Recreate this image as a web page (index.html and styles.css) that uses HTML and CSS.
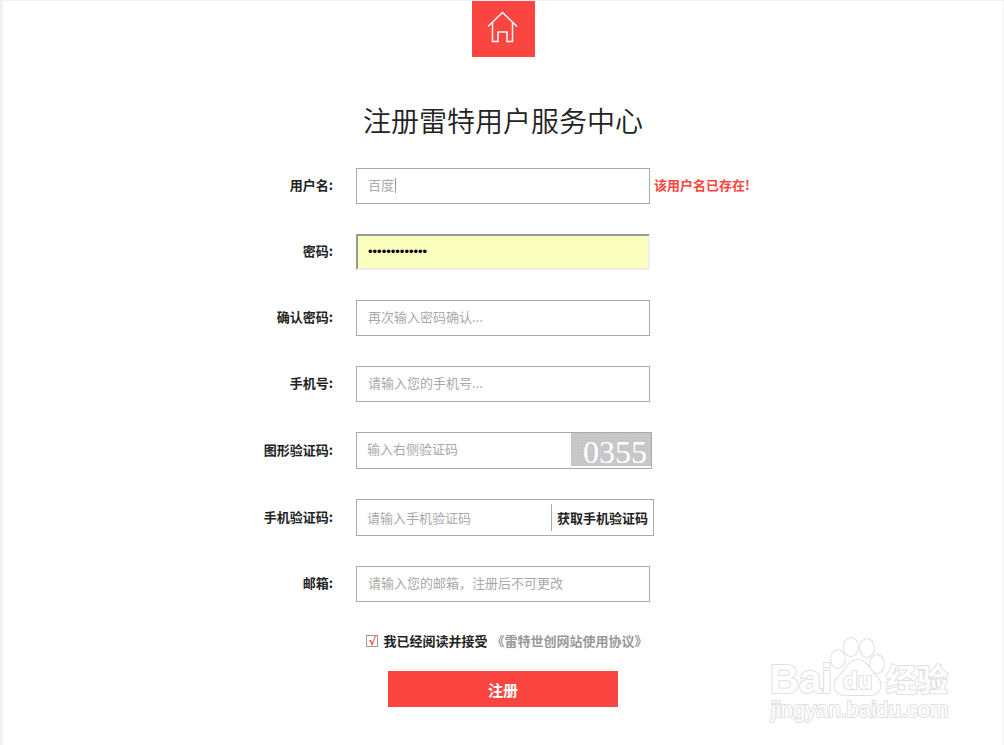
FILE: index.html
```html
<!DOCTYPE html>
<html lang="zh-CN">
<head>
    <meta charset="UTF-8">
    <meta name="viewport" content="width=device-width, initial-scale=1.0">
    <title>注册雷特用户服务中心</title>
    <link rel="stylesheet" href="styles.css">
</head>
<body>
    <div class="page">
        <!-- Home link -->
        <a class="home" href="/" aria-label="首页">
            <svg width="32" height="32" viewBox="0 0 32 32" fill="none" stroke="#fff" stroke-width="1.5">
                <path d="M1 15.5 L15.5 1.5 L30 15.5"/>
                <path d="M5.5 12 V30.5 H11 V21 H20 V30.5 H25.5 V12"/>
            </svg>
        </a>

        <h1>注册雷特用户服务中心</h1>

        <form class="register" action="/register" method="post">
            <div class="row">
                <label for="username">用户名:</label>
                <div class="field">
                    <input class="box" type="text" id="username" name="username" value="百度">
                    <span class="caret"></span>
                </div>
                <span class="error">该用户名已存在!</span>
            </div>
            <div class="row">
                <label for="password">密码:</label>
                <input class="box filled" type="password" id="password" name="password" value="1234567890123">
            </div>
            <div class="row">
                <label for="confirm">确认密码:</label>
                <input class="box" type="password" id="confirm" name="confirm" placeholder="再次输入密码确认...">
            </div>
            <div class="row">
                <label for="phone">手机号:</label>
                <input class="box" type="text" id="phone" name="phone" placeholder="请输入您的手机号...">
            </div>
            <div class="row">
                <label for="captcha">图形验证码:</label>
                <div class="group captcha">
                    <input type="text" id="captcha" name="captcha" placeholder="输入右侧验证码">
                    <span class="code">0355</span>
                </div>
            </div>
            <div class="row">
                <label for="sms">手机验证码:</label>
                <div class="group sms">
                    <input type="text" id="sms" name="sms" placeholder="请输入手机验证码">
                    <button type="button" class="get-code">获取手机验证码</button>
                </div>
            </div>
            <div class="row">
                <label for="email">邮箱:</label>
                <input class="box" type="text" id="email" name="email" placeholder="请输入您的邮箱，注册后不可更改">
            </div>

            <div class="agree">
                <input type="checkbox" id="agree" name="agree" checked>
                <label for="agree">我已经阅读并接受</label>
                <a href="/agreement">《雷特世创网站使用协议》</a>
            </div>
            <button type="submit" class="submit">注册</button>
        </form>
    </div>

    <!-- Watermark -->
    <svg class="watermark" width="184" height="92" viewBox="0 0 184 92">
        <g class="brand">
            <text x="2" y="57" font-size="40">Bai</text>
            <ellipse cx="70" cy="23" rx="7" ry="9"/>
            <ellipse cx="83" cy="11" rx="7" ry="9"/>
            <ellipse cx="99" cy="12" rx="7" ry="9"/>
            <ellipse cx="109" cy="28" rx="7" ry="9"/>
            <path d="M90 24 C99 24 101 34 108 40 C117 49 111 59 102 59 H77 C66 59 63 48 71 40 C79 34 80 24 90 24 Z"/>
            <text x="75" y="53" font-size="24">du</text>
            <text class="cn" x="118" y="55" font-size="31">经验</text>
        </g>
        <text class="domain" x="3" y="81" font-size="22">jingyan.baidu.com</text>
    </svg>
</body>
</html>
```
FILE: styles.css
```css
* {
    box-sizing: border-box;
}
body {
    margin: 0;
    padding: 1px 1px 0 3px;
    min-height: 100vh;
    display: flex;
    position: relative;
    background-color: #f2f2f2;
    font-family: "Noto Sans CJK SC", sans-serif;
    font-size: 13px;
    color: #222;
}
.page {
    flex: 1;
    background-color: #fff;
}
.home {
    display: flex;
    justify-content: center;
    align-items: center;
    width: 63px;
    height: 56px;
    margin: 0 auto;
    padding-bottom: 4px;
    background-color: #fb4540;
}
h1 {
    margin: 43px 0 27px;
    text-align: center;
    font-size: 28px;
    line-height: 41px;
    font-weight: 350;
}
input, button {
    font-family: inherit;
    font-size: 13px;
}
.row {
    display: grid;
    grid-template-columns: 1fr 294px 1fr;
    align-items: center;
    margin-bottom: 30px;
}
.row label {
    padding: 0 23px 2px 0;
    text-align: right;
    font-weight: bold;
    line-height: 20px;
}
.field {
    position: relative;
}
.box {
    display: block;
    width: 100%;
    height: 36px;
    padding: 0 11px 4px;
    border: 1px solid #a9a9a9;
    background-color: #fff;
    color: #a9a9a9;
    outline: none;
}
.box.filled {
    padding: 0 10px 2px;
    border: 2px solid;
    border-color: #999 #eee #eee #999;
    background-color: #faffbd;
    color: #000;
    font-family: "Liberation Sans", sans-serif;
}
::placeholder {
    color: #a9a9a9;
    opacity: 1;
}
.caret {
    position: absolute;
    left: 39px;
    top: 10px;
    width: 1px;
    height: 15px;
    background-color: #999;
}
.error {
    padding: 0 0 2px 4px;
    line-height: 20px;
    font-weight: bold;
    color: #fb4540;
}
.group {
    display: flex;
    height: 37px;
    border: 1px solid #a9a9a9;
}
.group input {
    flex: 1;
    min-width: 0;
    padding: 0 10px;
    border: none;
    outline: none;
}
.captcha {
    width: 296px;
}
.captcha input {
    padding-bottom: 5px;
}
.code {
    width: 80px;
    height: 33px;
    padding-right: 4px;
    text-align: right;
    font-family: "Liberation Serif", serif;
    font-size: 32px;
    line-height: 38px;
    color: #fff;
    background-color: #c9c7c9;
    background-image: radial-gradient(#c1bbc2 1px, transparent 1px);
    background-size: 3px 3px;
}
.sms {
    width: 298px;
}
.get-code {
    margin: 4px 0;
    padding: 0 5px;
    border: none;
    border-left: 1px solid #a9a9a9;
    background: none;
    font-weight: bold;
    color: #222;
    cursor: pointer;
}
.agree {
    display: flex;
    justify-content: center;
    align-items: center;
    line-height: 20px;
    margin: -1px 0 20px;
    padding-left: 8px;
    font-weight: bold;
}
.agree input {
    appearance: none;
    display: flex;
    justify-content: center;
    align-items: center;
    width: 12px;
    height: 12px;
    margin: 0 5px 0 0;
    border: 1px solid #999;
}
.agree input:checked::after {
    content: "√";
    font-family: "DejaVu Sans", sans-serif;
    font-size: 11px;
    font-weight: bold;
    color: #fb4540;
}
.agree a {
    margin-left: 4px;
    color: #999;
    text-decoration: none;
}
.submit {
    display: block;
    width: 230px;
    height: 36px;
    margin: 0 auto;
    border: none;
    background-color: #fb4540;
    color: #fff;
    font-size: 15px;
    font-weight: bold;
    cursor: pointer;
}
.watermark {
    position: absolute;
    right: 52px;
    bottom: 17px;
    pointer-events: none;
    fill: #fff;
    stroke: #e0e0e0;
    stroke-width: 2px;
    paint-order: stroke;
    font-family: "Liberation Sans", sans-serif;
}
.brand {
    font-weight: bold;
}
.cn {
    font-family: "Noto Sans CJK SC", sans-serif;
}
```
